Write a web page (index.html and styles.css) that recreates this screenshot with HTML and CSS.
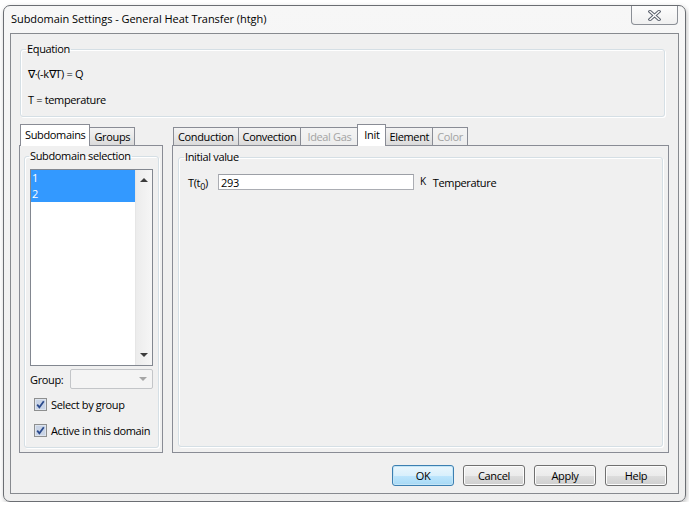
FILE: index.html
```html
<!DOCTYPE html>
<html lang="en">
<head>
    <meta charset="UTF-8">
    <title>Subdomain Settings - General Heat Transfer (htgh)</title>
    <link rel="stylesheet" href="styles.css">
</head>
<body>
    <div class="window">
        <div class="titlebar">
            <span class="title">Subdomain Settings - General Heat Transfer (htgh)</span>
            <button class="close-button" title="Close">
                <svg width="13" height="11" viewBox="0 0 13 11">
                    <path d="M2 1.5 L11 9.5 M11 1.5 L2 9.5" stroke="#5e6470" stroke-width="3.4" stroke-linecap="square"/>
                    <path d="M2 1.5 L11 9.5 M11 1.5 L2 9.5" stroke="#fff" stroke-width="1.3" stroke-linecap="square"/>
                </svg>
            </button>
        </div>

        <div class="client">
            <fieldset class="group equation">
                <legend>Equation</legend>
                <p>&nabla;&middot;(-k&nabla;T) = Q</p>
                <p>T = temperature</p>
            </fieldset>

            <div class="tabs-row">
                <div class="tabbox left-box">
                    <div class="tab-strip">
                        <span class="tab active">Subdomains</span>
                        <span class="tab">Groups</span>
                    </div>
                    <div class="tab-panel">
                        <fieldset class="group selection">
                            <legend>Subdomain selection</legend>
                            <div class="listbox">
                                <ul class="list-items">
                                    <li class="selected">1</li>
                                    <li class="selected">2</li>
                                </ul>
                                <div class="scrollbar">
                                    <span class="arrow-up"></span>
                                    <span class="arrow-down"></span>
                                </div>
                            </div>
                            <div class="group-row">
                                <span class="group-label">Group:</span>
                                <div class="combo"><span class="combo-arrow"></span></div>
                            </div>
                            <label class="check">
                                <svg class="check-box" width="13" height="13" viewBox="0 0 13 13">
                                    <rect x="0.5" y="0.5" width="12" height="12" fill="#dde4ee" stroke="#8e8f8f"/>
                                    <rect x="2" y="2" width="9" height="9" fill="#c9d4e6"/>
                                    <path d="M3.2 6.6 L5.4 9.3 L9.8 3.2" fill="none" stroke="#2b4a8c" stroke-width="1.8"/>
                                </svg>
                                Select by group
                            </label>
                            <label class="check">
                                <svg class="check-box" width="13" height="13" viewBox="0 0 13 13">
                                    <rect x="0.5" y="0.5" width="12" height="12" fill="#dde4ee" stroke="#8e8f8f"/>
                                    <rect x="2" y="2" width="9" height="9" fill="#c9d4e6"/>
                                    <path d="M3.2 6.6 L5.4 9.3 L9.8 3.2" fill="none" stroke="#2b4a8c" stroke-width="1.8"/>
                                </svg>
                                Active in this domain
                            </label>
                        </fieldset>
                    </div>
                </div>

                <div class="tabbox right-box">
                    <div class="tab-strip">
                        <span class="tab">Conduction</span>
                        <span class="tab">Convection</span>
                        <span class="tab disabled wide">Ideal Gas</span>
                        <span class="tab active wide">Init</span>
                        <span class="tab narrow">Element</span>
                        <span class="tab disabled">Color</span>
                    </div>
                    <div class="tab-panel">
                        <fieldset class="group initial">
                            <legend>Initial value</legend>
                            <div class="init-row">
                                <span class="var-name">T(t<sub>0</sub>)</span>
                                <input class="text-field" type="text" value="293">
                                <span class="unit">K</span>
                                <span class="desc">Temperature</span>
                            </div>
                        </fieldset>
                    </div>
                </div>
            </div>

            <div class="button-row">
                <button class="dlg-button default">OK</button>
                <button class="dlg-button">Cancel</button>
                <button class="dlg-button">Apply</button>
                <button class="dlg-button">Help</button>
            </div>
        </div>
    </div>
</body>
</html>
```

FILE: styles.css
```css
body {
    margin: 0;
    background-color: #fff;
    font-family: "Open Sans", "Noto Sans", sans-serif;
    font-size: 11px;
    color: #000;
}

.window {
    width: 683px;
    height: 497px;
    margin: 5px 0 0 3px;
    box-sizing: border-box;
    border: 1px solid #6b6e73;
    border-radius: 7px;
    background: linear-gradient(#f7f7f7, #eeeeee);
    box-shadow: 1px 2px 5px rgba(0, 0, 0, 0.25);
    padding: 0 6px 7px 6px;
    display: flex;
    flex-direction: column;
}

.titlebar {
    height: 27px;
    display: flex;
    justify-content: space-between;
    align-items: flex-start;
}

.title {
    margin: 5px 0 0 1px;
    font-size: 11px;
    line-height: 16px;
    letter-spacing: -0.05px;
}

.close-button {
    width: 47px;
    height: 19px;
    margin-right: 1px;
    padding: 0;
    border: 1px solid #8b8f96;
    border-top: none;
    border-radius: 0 0 4px 4px;
    background: linear-gradient(#fdfdfd, #f0f0f0);
    display: flex;
    justify-content: center;
    align-items: center;
}

.client {
    flex: 1;
    border: 1px solid #878a8f;
    background-color: #f0f0f0;
    padding-top: 8px;
    display: flex;
    flex-direction: column;
    letter-spacing: -0.35px;
    white-space: nowrap;
}

/* group boxes */
.group {
    border: 1px solid #d5dfe5;
    border-radius: 3px;
    box-shadow: inset 1px 1px 0 #fff, 1px 1px 0 #fff;
    margin: 0;
    padding: 0;
    min-width: 0;
}

.group legend {
    padding: 0 1px;
    line-height: 14px;
}

.equation {
    margin: 0 13px 0 9px;
    padding: 11px 7px 9px 7px;
}

.equation legend {
    margin-left: -2px;
}

.equation p {
    margin: 0;
    line-height: 14px;
}

.equation p + p {
    margin-top: 12px;
}

/* tab controls */
.tabs-row {
    display: flex;
    gap: 9px;
    margin: 7px 9px 0 8px;
}

.tabbox {
    display: flex;
    flex-direction: column;
    height: 329px;
}

.left-box {
    width: 144px;
}

.right-box {
    flex: 1;
}

.tab-strip {
    height: 21px;
    display: flex;
    align-items: flex-end;
    padding-left: 1px;
    position: relative;
    z-index: 1;
}

.tab {
    height: 17px;
    line-height: 17px;
    padding: 0 4px;
    border: 1px solid #898c95;
    border-bottom: none;
    background: linear-gradient(#f3f3f3, #e9e9e9 50%, #dadada);
    margin-right: -1px;
}

.tab.wide {
    padding: 0 6px;
}

.tab.narrow {
    padding: 0 3px;
}

.tab.active {
    height: 21px;
    line-height: 19px;
    margin-bottom: -1px;
    background: #fff;
    position: relative;
    z-index: 2;
}

.tab.disabled {
    color: #a3a3a3;
    background: linear-gradient(#f4f4f4, #ececec);
}

.tab-panel {
    flex: 1;
    border: 1px solid #898c95;
    background-color: #f0f0f0;
    display: flex;
}

/* subdomain selection */
.selection {
    flex: 1;
    margin: 3px 3px 4px 4px;
    padding: 6px 5px 0 5px;
}

.selection legend {
    margin-left: -1px;
}

.listbox {
    height: 195px;
    border: 1px solid #828790;
    background-color: #fff;
    display: flex;
}

.list-items {
    flex: 1;
    list-style: none;
    margin: 0;
    padding: 0;
}

.list-items li {
    height: 16px;
    line-height: 16px;
    padding-left: 1px;
}

.list-items li.selected {
    background-color: #3399ff;
    color: #fff;
}

.scrollbar {
    width: 16px;
    border-left: 1px solid #e6e6e6;
    background: linear-gradient(90deg, #ececec, #f6f6f6);
    display: flex;
    flex-direction: column;
    justify-content: space-between;
    align-items: center;
    padding: 8px 0 8px 0;
}

.arrow-up {
    border: 4px solid transparent;
    border-top: none;
    border-bottom: 4px solid #3c3c3c;
}

.arrow-down {
    border: 4px solid transparent;
    border-bottom: none;
    border-top: 4px solid #3c3c3c;
}

.group-row {
    display: flex;
    align-items: center;
    justify-content: space-between;
    margin-top: 3px;
    height: 20px;
}

.combo {
    height: 18px;
    border: 1px solid #c3c5c8;
    border-radius: 2px;
    background-color: #f4f4f4;
    display: flex;
    justify-content: flex-end;
    align-items: center;
    padding-right: 5px;
    box-sizing: content-box;
    width: 76px;
}

.combo-arrow {
    border: 4px solid transparent;
    border-bottom: none;
    border-top: 4px solid #a6a6a6;
}

.check {
    display: flex;
    align-items: center;
    gap: 4px;
    margin-left: 4px;
    height: 14px;
}

.group-row + .check {
    margin-top: 8px;
}

.check + .check {
    margin-top: 12px;
}

/* initial value */
.initial {
    flex: 1;
    margin: 4px 5px 5px 5px;
    padding: 0;
}

.initial legend {
    margin-left: 5px;
}

.init-row {
    display: flex;
    align-items: center;
    margin: 10px 0 0 9px;
}

.var-name {
    width: 30px;
}

.var-name sub {
    font-size: 9px;
    line-height: 0;
}

.text-field {
    height: 14px;
    margin: 0;
    padding: 0 2px;
    border: 1px solid #abadb3;
    border-top-color: #9c9fa6;
    font-family: inherit;
    font-size: 11px;
    letter-spacing: -0.35px;
    box-sizing: content-box;
    width: 190px;
}

.unit {
    margin: -3px 0 0 6px;
    font-size: 10px;
}

.desc {
    margin-left: 7px;
}

/* dialog buttons */
.button-row {
    display: flex;
    justify-content: flex-end;
    gap: 9px;
    margin: 12px 11px 0 0;
}

.dlg-button {
    width: 62px;
    height: 21px;
    padding: 0;
    border: 1px solid #707070;
    border-radius: 3px;
    background: linear-gradient(#f2f2f2, #ebebeb 50%, #dddddd 50%, #cfcfcf);
    box-shadow: inset 0 0 0 1px #fcfcfc;
    font-family: inherit;
    font-size: 11px;
    letter-spacing: -0.35px;
    color: #000;
}

.dlg-button.default {
    border-color: #3c7fb1;
    background: linear-gradient(#eaf6fd, #d9f0fc 50%, #bee6fd 50%, #a7d9f5);
    box-shadow: inset 0 0 0 1px #c4e5f6;
}
```
